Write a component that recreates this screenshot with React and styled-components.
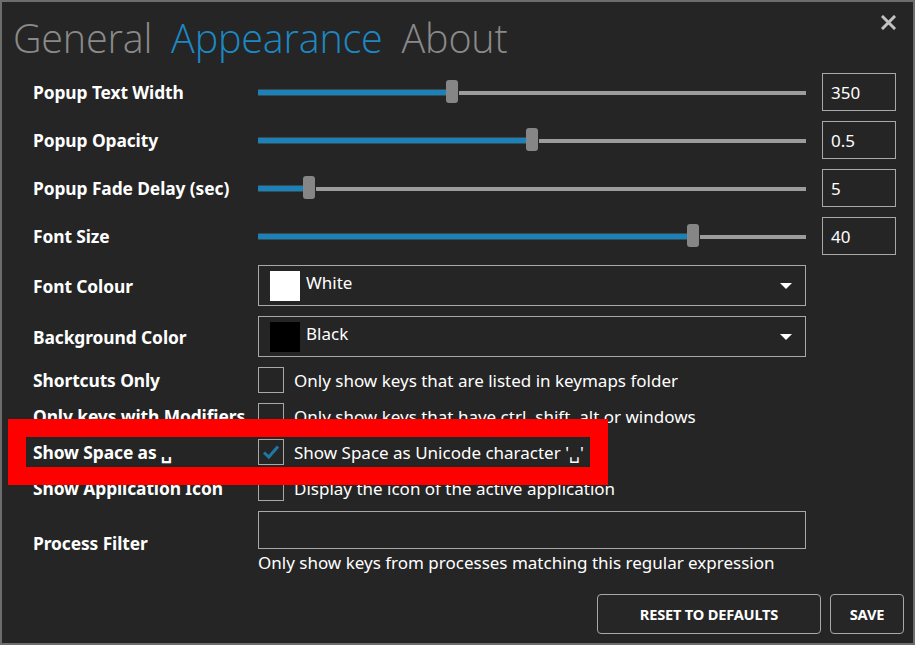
import React from 'react';
import styled, { createGlobalStyle } from 'styled-components';

const GlobalStyle = createGlobalStyle`
  html, body {
    margin: 0;
    padding: 0;
    background: #252525;
  }
  * {
    box-sizing: border-box;
  }
`;

const sliders = [
  { label: 'Popup Text Width', value: '350', pos: 0.351 },
  { label: 'Popup Opacity', value: '0.5', pos: 0.5 },
  { label: 'Popup Fade Delay (sec)', value: '5', pos: 0.084 },
  { label: 'Font Size', value: '40', pos: 0.8 },
];

const checks = [
  { label: 'Shortcuts Only', text: 'Only show keys that are listed in keymaps folder', checked: false },
  { label: 'Only keys with Modifiers', text: 'Only show keys that have ctrl, shift, alt or windows', checked: false },
  { label: 'Show Space as \u2423', text: "Show Space as Unicode character '\u2423'", checked: true },
  { label: 'Show Application Icon', text: 'Display the icon of the active application', checked: false },
];

const Slider = ({ pos }) => {
  const thumb = 5.5 + pos * 537;
  return (
    <Track>
      <Fill style={{ width: thumb - 6 }} />
      <Rest style={{ left: thumb + 7 }} />
      <Thumb style={{ left: thumb - 6 }} />
    </Track>
  );
};

const Combo = ({ swatch, text }) => (
  <ComboBox>
    <Swatch color={swatch} />
    <ComboText>{text}</ComboText>
    <Arrow />
  </ComboBox>
);

const CheckMark = () => (
  <svg width='18' height='16' viewBox='0 0 18 16'>
    <path d='M2 8.5 L6.8 13 L16 2.5' fill='none' stroke='#1d78a8' strokeWidth='3' />
  </svg>
);

const CloseIcon = () => (
  <svg width='15' height='15' viewBox='0 0 15 15'>
    <path d='M2 2 L13 13 M13 2 L2 13' stroke='#c2c2c2' strokeWidth='3' strokeLinecap='square' />
  </svg>
);

const App = () => {
  return (
    <>
      <GlobalStyle />
      <Window>
        <Header>
          <Tabs>
            <Tab>General</Tab>
            <Tab active>Appearance</Tab>
            <Tab>About</Tab>
          </Tabs>
          <Close>
            <CloseIcon />
          </Close>
        </Header>
        <Form>
          {sliders.map((s) => (
            <Row key={s.label} h={38}>
              <Label>{s.label}</Label>
              <Slider pos={s.pos} />
              <ValueBox>{s.value}</ValueBox>
            </Row>
          ))}
          <Row h={41}>
            <Label>Font Colour</Label>
            <Combo swatch='#ffffff' text='White' />
          </Row>
          <Row h={41}>
            <Label>Background Color</Label>
            <Combo swatch='#000000' text='Black' />
          </Row>
          {checks.map((c) => (
            <Row key={c.label} h={26}>
              <Label>{c.label}</Label>
              <CheckLine>
                <Box>{c.checked && <CheckMark />}</Box>
                <CheckText>{c.text}</CheckText>
              </CheckLine>
            </Row>
          ))}
          <Row h={62}>
            <Label>Process Filter</Label>
            <FilterCol>
              <TextInput />
              <Hint>Only show keys from processes matching this regular expression</Hint>
            </FilterCol>
          </Row>
        </Form>
        <Footer>
          <Button wide>Reset to defaults</Button>
          <Button>Save</Button>
        </Footer>
        <Highlight />
      </Window>
    </>
  );
};

export default App;

const Window = styled.div`
  position: relative;
  width: 915px;
  height: 645px;
  border: 2px solid #6d6d6d;
  background: #252525;
  font-family: 'Noto Sans', 'Open Sans', sans-serif;
  color: #ffffff;
  display: flex;
  flex-direction: column;
`;

const Header = styled.div`
  height: 71px;
  display: flex;
  justify-content: space-between;
  align-items: flex-start;
  padding: 0 17px 0 11px;
`;

const Tabs = styled.div`
  display: flex;
  gap: 19px;
  padding-top: 9px;
`;

const Tab = styled.div`
  font-family: 'Open Sans', 'Noto Sans', sans-serif;
  font-weight: 300;
  font-size: 39.5px;
  line-height: 54px;
  letter-spacing: -0.2px;
  color: ${(p) => (p.active ? '#1c88c4' : '#8a8a8a')};
`;

const Close = styled.div`
  margin-top: 13px;
  display: flex;
`;

const Form = styled.div`
  display: flex;
  flex-direction: column;
  gap: 10px;
  padding-left: 31px;
`;

const Row = styled.div`
  display: grid;
  grid-template-columns: 225px 548px 90px;
  height: ${(p) => p.h}px;
  align-items: center;
`;

const Label = styled.div`
  font-size: 17.4px;
  font-weight: bold;
  white-space: nowrap;
  letter-spacing: -0.1px;
`;

const Track = styled.div`
  position: relative;
  height: 38px;
`;

const Fill = styled.div`
  position: absolute;
  left: 0;
  top: 16px;
  height: 7px;
  background: #1b82b8;
  border-top: 1px solid #3a4a55;
  border-bottom: 1px solid #3a4a55;
`;

const Rest = styled.div`
  position: absolute;
  right: 0;
  top: 17.5px;
  height: 4px;
  background: #9c9c9c;
`;

const Thumb = styled.div`
  position: absolute;
  top: 7px;
  width: 12px;
  height: 23px;
  border-radius: 3px;
  background: #868686;
`;

const ValueBox = styled.div`
  margin-left: 16px;
  height: 38px;
  border: 1.5px solid #a8a8a8;
  display: flex;
  align-items: center;
  padding-left: 8px;
  font-size: 17px;
`;

const ComboBox = styled.div`
  height: 41px;
  border: 1.5px solid #a8a8a8;
  display: flex;
  align-items: center;
  padding: 0 13px 0 11px;
`;

const Swatch = styled.div`
  width: 30px;
  height: 30px;
  background: ${(p) => p.color};
`;

const ComboText = styled.div`
  flex: 1;
  margin-left: 6px;
  margin-top: -6px;
  font-size: 17px;
`;

const Arrow = styled.div`
  width: 0;
  height: 0;
  border-left: 6px solid transparent;
  border-right: 6px solid transparent;
  border-top: 6px solid #ffffff;
`;

const CheckLine = styled.div`
  display: flex;
  align-items: center;
  gap: 10px;
  grid-column: 2 / 4;
`;

const Box = styled.div`
  width: 26px;
  height: 26px;
  border: 1.5px solid #a8a8a8;
  display: flex;
  align-items: center;
  justify-content: center;
`;

const CheckText = styled.div`
  font-size: 17px;
  white-space: nowrap;
`;

const FilterCol = styled.div`
  display: flex;
  flex-direction: column;
  align-self: start;
  grid-column: 2 / 4;
`;

const TextInput = styled.div`
  width: 548px;
  height: 38px;
  border: 1.5px solid #a8a8a8;
`;

const Hint = styled.div`
  font-size: 17px;
  line-height: 24px;
  margin-top: 2px;
  white-space: nowrap;
`;

const Footer = styled.div`
  display: flex;
  justify-content: flex-end;
  gap: 9px;
  padding-right: 9px;
  margin-top: 21px;
`;

const Button = styled.button`
  width: ${(p) => (p.wide ? 224 : 74)}px;
  height: 40px;
  border: 1.5px solid #a8a8a8;
  border-radius: 4px;
  background: #262626;
  color: #ffffff;
  font-family: 'Noto Sans', sans-serif;
  font-weight: bold;
  font-size: 14.6px;
  letter-spacing: -0.2px;
  text-transform: uppercase;
`;

const Highlight = styled.div`
  position: absolute;
  left: 6px;
  top: 417px;
  width: 600px;
  height: 66px;
  border: 18px solid #ff0000;
`;
